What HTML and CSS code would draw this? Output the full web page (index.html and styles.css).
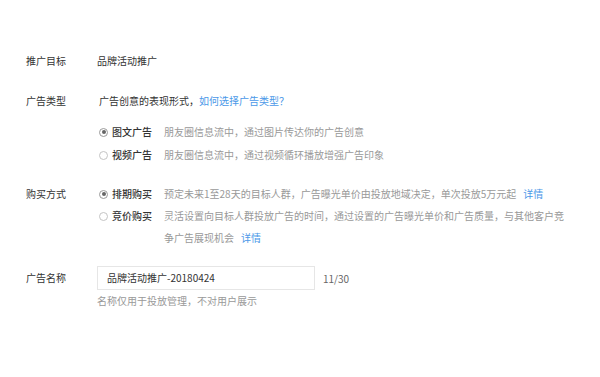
FILE: index.html
```html
<!DOCTYPE html>
<html lang="zh-CN">
<head>
<meta charset="utf-8">
<title>广告设置</title>
<link rel="stylesheet" href="styles.css">
</head>
<body>
<div class="form">
  <div class="row r-target">
    <div class="label">推广目标</div>
    <div class="content"><div class="line">品牌活动推广</div></div>
  </div>

  <div class="row r-type">
    <div class="label">广告类型</div>
    <div class="content">
      <div class="line intro"><span>广告创意的表现形式，</span><a class="link">如何选择广告类型？</a></div>
      <div class="options">
        <div class="option">
          <span class="radio checked"></span>
          <span class="opt-name">图文广告</span>
          <span class="desc">朋友圈信息流中，通过图片传达你的广告创意</span>
        </div>
        <div class="option">
          <span class="radio"></span>
          <span class="opt-name">视频广告</span>
          <span class="desc">朋友圈信息流中，通过视频循环播放增强广告印象</span>
        </div>
      </div>
    </div>
  </div>

  <div class="row r-buy">
    <div class="label">购买方式</div>
    <div class="content">
      <div class="option">
        <span class="radio checked"></span>
        <span class="opt-name">排期购买</span>
        <div class="desc"><span>预定未来1至28天的目标人群，广告曝光单价由投放地域决定，单次投放5万元起</span><a class="link more">详情</a></div>
      </div>
      <div class="option">
        <span class="radio"></span>
        <span class="opt-name">竞价购买</span>
        <div class="desc">
          <div>灵活设置向目标人群投放广告的时间，通过设置的广告曝光单价和广告质量，与其他客户竞</div>
          <div><span>争广告展现机会</span><a class="link more">详情</a></div>
        </div>
      </div>
    </div>
  </div>

  <div class="row r-name">
    <div class="label">广告名称</div>
    <div class="content">
      <div class="input-line">
        <div class="input">品牌活动推广-20180424</div>
        <span class="count">11/30</span>
      </div>
      <div class="hint">名称仅用于投放管理，不对用户展示</div>
    </div>
  </div>
</div>
</body>
</html>
```

FILE: styles.css
```css
* { box-sizing: border-box; }
html, body { margin: 0; padding: 0; background: #fff; }
body {
  width: 600px;
  height: 377px;
  overflow: hidden;
  font-family: "Noto Sans CJK SC", "Microsoft YaHei", sans-serif;
  font-size: 10px;
  color: #333;
}
.form {
  padding: 50px 0 0 26px;
  display: flex;
  flex-direction: column;
}
.row {
  display: flex;
  align-items: flex-start;
}
.label {
  width: 71px;
  flex: none;
  line-height: 22px;
  color: #333;
}
.content {
  display: flex;
  flex-direction: column;
}
.line { line-height: 22px; }
.intro { padding-left: 2px; }
.link { color: #4b98e8; text-decoration: none; }
.more { margin-left: 7px; }

.r-type { margin-top: 18px; }
.options { margin-top: 9px; display: flex; flex-direction: column; gap: 1px; }
.r-buy { margin-top: 17px; }
.r-name { margin-top: 17px; }

.option {
  display: flex;
  align-items: flex-start;
  line-height: 22px;
}
.radio {
  flex: none;
  width: 9px;
  height: 9px;
  margin: 6.5px 4px 0 2px;
  border: 1px solid #c4c4c4;
  border-radius: 50%;
  background: #fff;
  position: relative;
}
.radio.checked { border-color: #9a9a9a; }
.radio.checked::after {
  content: "";
  position: absolute;
  left: 1.5px;
  top: 1.5px;
  width: 4px;
  height: 4px;
  border-radius: 50%;
  background: #666;
}
.opt-name {
  flex: none;
  color: #333;
  font-weight: 500;
  margin-right: 12px;
}
.desc {
  color: #999;
  width: 405px;
}

.input-line {
  display: flex;
  align-items: center;
}
.input {
  width: 218px;
  height: 24px;
  border: 1px solid #e6e6e6;
  padding-left: 9px;
  line-height: 22px;
  color: #333;
}
.count {
  margin-left: 8px;
  color: #666;
}
.r-name .label { line-height: 24px; }
.hint {
  margin-top: 4px;
  line-height: 14px;
  color: #999;
}
```
